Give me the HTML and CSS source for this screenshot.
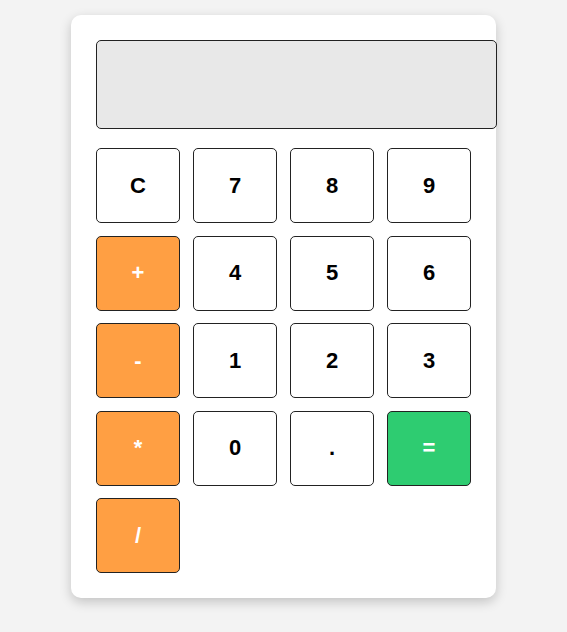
FILE: index.html
```html
<!DOCTYPE html>
<html>
<head>
<meta charset="utf-8">
<link rel="stylesheet" href="styles.css">
</head>
<body>
<div class="calculator">
  <div class="display"></div>
  <div class="keys">
    <button class="key">C</button>
    <button class="key">7</button>
    <button class="key">8</button>
    <button class="key">9</button>
    <button class="key op">+</button>
    <button class="key">4</button>
    <button class="key">5</button>
    <button class="key">6</button>
    <button class="key op">-</button>
    <button class="key">1</button>
    <button class="key">2</button>
    <button class="key">3</button>
    <button class="key op">*</button>
    <button class="key">0</button>
    <button class="key">.</button>
    <button class="key eq">=</button>
    <button class="key op">/</button>
  </div>
</div>
</body>
</html>
```
FILE: styles.css
```css
html, body {
  margin: 0;
  padding: 0;
}
body {
  background: #f3f3f3;
  font-family: "Liberation Sans", Arial, sans-serif;
  display: flex;
  justify-content: center;
  padding-top: 15px;
  min-height: 617px;
}
.calculator {
  align-self: flex-start;
  width: 375px;
  padding: 25px;
  background: #fff;
  border-radius: 10px;
  box-shadow: 0 4px 12px rgba(0, 0, 0, 0.2);
}
.display {
  box-sizing: border-box;
  width: 401px;
  height: 89px;
  background: #e8e8e8;
  border: 1px solid #222;
  border-radius: 5px;
  margin-bottom: 19px;
}
.keys {
  display: grid;
  grid-template-columns: repeat(4, 84px);
  grid-auto-rows: 75px;
  column-gap: 13px;
  row-gap: 12.5px;
}
.key {
  box-sizing: border-box;
  margin: 0;
  padding: 0;
  background: #fff;
  border: 1px solid #222;
  border-radius: 5px;
  font-family: "Liberation Sans", Arial, sans-serif;
  font-size: 22px;
  font-weight: bold;
  color: #000;
}
.key.op {
  background: #ff9f43;
  color: #fff;
}
.key.eq {
  background: #2ecc71;
  color: #fff;
}
```
